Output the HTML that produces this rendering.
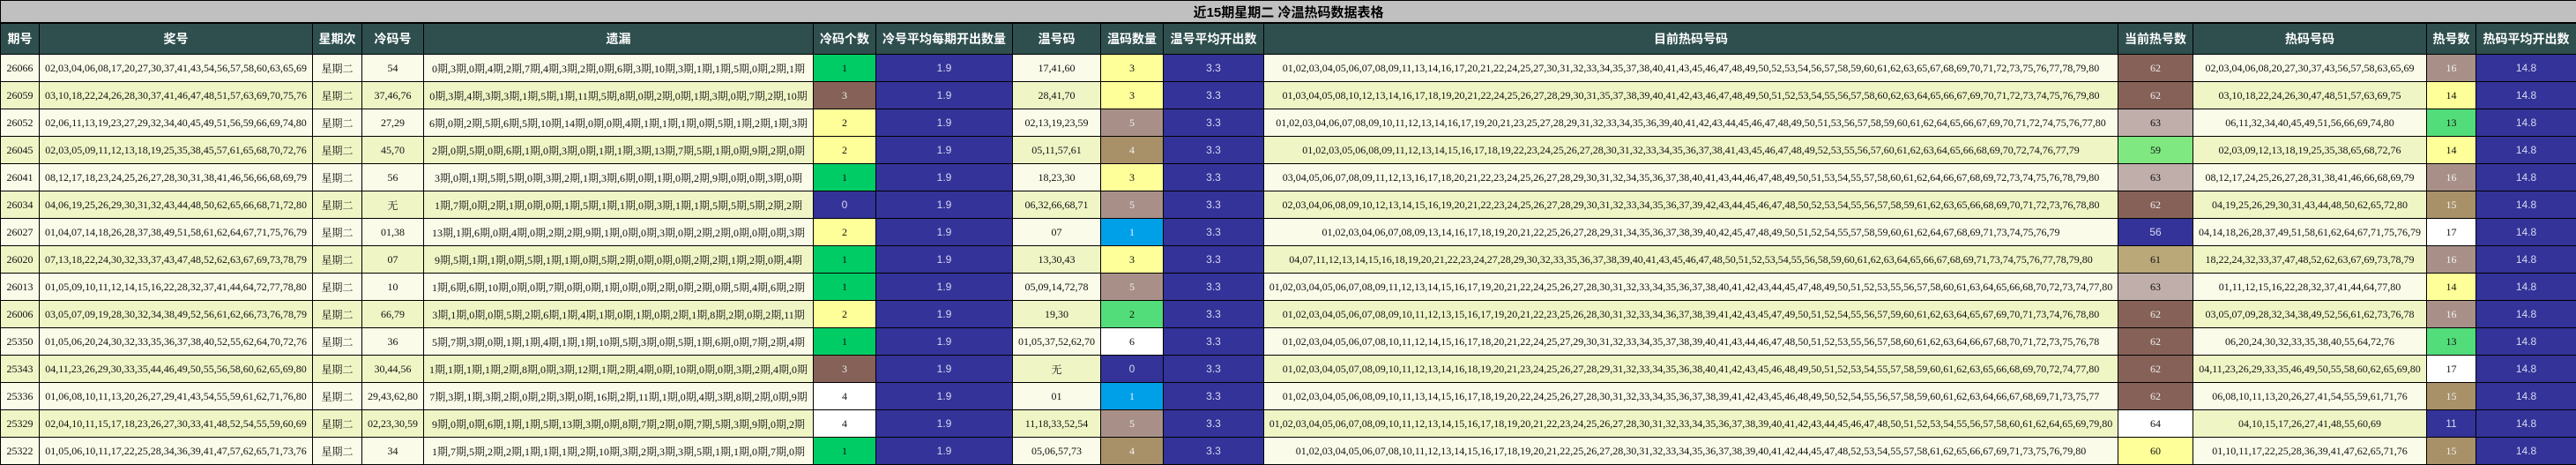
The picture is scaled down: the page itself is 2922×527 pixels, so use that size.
<!DOCTYPE html>
<html><head><meta charset="utf-8"><style>
html,body{margin:0;padding:0;background:#fff;width:2922px;height:527px;overflow:hidden}
table{border-collapse:collapse;table-layout:fixed;width:2922px}
td,th{border:1px solid #000;padding:0;text-align:center;white-space:nowrap;overflow:hidden;font-family:"Liberation Serif","Noto Serif CJK SC",serif;font-size:12px;color:#111}
.t td{height:24px;background:#c0c0c0;font-family:"Liberation Sans","Noto Sans CJK SC",sans-serif;font-weight:bold;font-size:15px;color:#000;border-bottom:2px solid #000}
th{height:34px;background:#2f4f4f;color:#fff;font-family:"Liberation Sans","Noto Sans CJK SC",sans-serif;font-weight:bold;font-size:14px}
tbody tr td{height:30px}
tr.a td{background:#fafbe8}
tr.b td{background:#f0f5c6}
tr td.n{background:#333399;color:#d8d8f0;font-family:"Liberation Sans",sans-serif}
tr td.g{background:#00cc66}
tr td.br{background:#856157;color:#eee}
tr td.y{background:#ffff99}
tr td.r{background:#a89088;color:#f2f2f2}
tr td.pk{background:#c0aeaa}
tr td.tn{background:#a89068;color:#f2f2f2}
tr td.lg{background:#80e880}
tr td.gg{background:#52dd7a}
tr td.kh{background:#bba878}
tr td.cy{background:#00a0e8;color:#eef}
tr td.w{background:#fff}
</style></head><body>
<table>
<colgroup><col style="width:44px"><col style="width:310px"><col style="width:56px"><col style="width:70px"><col style="width:442px"><col style="width:71px"><col style="width:155px"><col style="width:100px"><col style="width:71px"><col style="width:114px"><col style="width:969px"><col style="width:85px"><col style="width:265px"><col style="width:56px"><col style="width:114px"></colgroup>
<tr class="t"><td colspan="15">近15期星期二 冷温热码数据表格</td></tr>
<tr><th>期号</th><th>奖号</th><th>星期次</th><th>冷码号</th><th>遗漏</th><th>冷码个数</th><th>冷号平均每期开出数量</th><th>温号码</th><th>温码数量</th><th>温号平均开出数</th><th>目前热码号码</th><th>当前热号数</th><th>热码号码</th><th>热号数</th><th>热码平均开出数</th></tr>
<tbody>
<tr class="a"><td>26066</td><td>02,03,04,06,08,17,20,27,30,37,41,43,54,56,57,58,60,63,65,69</td><td>星期二</td><td>54</td><td>0期,3期,0期,4期,2期,7期,4期,3期,2期,0期,6期,3期,10期,3期,1期,1期,5期,0期,2期,1期</td><td class="g">1</td><td class="n">1.9</td><td>17,41,60</td><td class="y">3</td><td class="n">3.3</td><td>01,02,03,04,05,06,07,08,09,11,13,14,16,17,20,21,22,24,25,27,30,31,32,33,34,35,37,38,40,41,43,45,46,47,48,49,50,52,53,54,56,57,58,59,60,61,62,63,65,67,68,69,70,71,72,73,75,76,77,78,79,80</td><td class="br">62</td><td>02,03,04,06,08,20,27,30,37,43,56,57,58,63,65,69</td><td class="r">16</td><td class="n">14.8</td></tr>
<tr class="b"><td>26059</td><td>03,10,18,22,24,26,28,30,37,41,46,47,48,51,57,63,69,70,75,76</td><td>星期二</td><td>37,46,76</td><td>0期,3期,4期,3期,3期,1期,5期,1期,11期,5期,8期,0期,2期,0期,1期,3期,0期,7期,2期,10期</td><td class="br">3</td><td class="n">1.9</td><td>28,41,70</td><td class="y">3</td><td class="n">3.3</td><td>01,03,04,05,08,10,12,13,14,16,17,18,19,20,21,22,24,25,26,27,28,29,30,31,35,37,38,39,40,41,42,43,46,47,48,49,50,51,52,53,54,55,56,57,58,60,62,63,64,65,66,67,69,70,71,72,73,74,75,76,79,80</td><td class="br">62</td><td>03,10,18,22,24,26,30,47,48,51,57,63,69,75</td><td class="y">14</td><td class="n">14.8</td></tr>
<tr class="a"><td>26052</td><td>02,06,11,13,19,23,27,29,32,34,40,45,49,51,56,59,66,69,74,80</td><td>星期二</td><td>27,29</td><td>6期,0期,2期,5期,6期,5期,10期,14期,0期,0期,4期,1期,1期,1期,0期,5期,1期,2期,1期,3期</td><td class="y">2</td><td class="n">1.9</td><td>02,13,19,23,59</td><td class="r">5</td><td class="n">3.3</td><td>01,02,03,04,06,07,08,09,10,11,12,13,14,16,17,19,20,21,23,25,27,28,29,31,32,33,34,35,36,39,40,41,42,43,44,45,46,47,48,49,50,51,53,56,57,58,59,60,61,62,64,65,66,67,69,70,71,72,74,75,76,77,80</td><td class="pk">63</td><td>06,11,32,34,40,45,49,51,56,66,69,74,80</td><td class="gg">13</td><td class="n">14.8</td></tr>
<tr class="b"><td>26045</td><td>02,03,05,09,11,12,13,18,19,25,35,38,45,57,61,65,68,70,72,76</td><td>星期二</td><td>45,70</td><td>2期,0期,5期,0期,6期,1期,0期,3期,0期,1期,1期,3期,13期,7期,5期,1期,0期,9期,2期,0期</td><td class="y">2</td><td class="n">1.9</td><td>05,11,57,61</td><td class="tn">4</td><td class="n">3.3</td><td>01,02,03,05,06,08,09,11,12,13,14,15,16,17,18,19,22,23,24,25,26,27,28,30,31,32,33,34,35,36,37,38,41,43,45,46,47,48,49,52,53,55,56,57,60,61,62,63,64,65,66,68,69,70,72,74,76,77,79</td><td class="lg">59</td><td>02,03,09,12,13,18,19,25,35,38,65,68,72,76</td><td class="y">14</td><td class="n">14.8</td></tr>
<tr class="a"><td>26041</td><td>08,12,17,18,23,24,25,26,27,28,30,31,38,41,46,56,66,68,69,79</td><td>星期二</td><td>56</td><td>3期,0期,1期,5期,5期,0期,3期,2期,1期,3期,6期,0期,1期,0期,2期,9期,0期,0期,3期,0期</td><td class="g">1</td><td class="n">1.9</td><td>18,23,30</td><td class="y">3</td><td class="n">3.3</td><td>03,04,05,06,07,08,09,11,12,13,16,17,18,20,21,22,23,24,25,26,27,28,29,30,31,32,34,35,36,37,38,40,41,43,44,46,47,48,49,50,51,53,54,55,57,58,60,61,62,64,66,67,68,69,72,73,74,75,76,78,79,80</td><td class="pk">63</td><td>08,12,17,24,25,26,27,28,31,38,41,46,66,68,69,79</td><td class="r">16</td><td class="n">14.8</td></tr>
<tr class="b"><td>26034</td><td>04,06,19,25,26,29,30,31,32,43,44,48,50,62,65,66,68,71,72,80</td><td>星期二</td><td>无</td><td>1期,7期,0期,2期,1期,0期,0期,1期,5期,1期,1期,0期,3期,1期,1期,5期,5期,5期,2期,2期</td><td class="n">0</td><td class="n">1.9</td><td>06,32,66,68,71</td><td class="r">5</td><td class="n">3.3</td><td>02,03,04,06,08,09,10,12,13,14,15,16,19,20,21,22,23,24,25,26,27,28,29,30,31,32,33,34,35,36,37,39,42,43,44,45,46,47,48,50,52,53,54,55,56,57,58,59,61,62,63,65,66,68,69,70,71,72,73,76,78,80</td><td class="br">62</td><td>04,19,25,26,29,30,31,43,44,48,50,62,65,72,80</td><td class="tn">15</td><td class="n">14.8</td></tr>
<tr class="a"><td>26027</td><td>01,04,07,14,18,26,28,37,38,49,51,58,61,62,64,67,71,75,76,79</td><td>星期二</td><td>01,38</td><td>13期,1期,6期,0期,4期,0期,2期,2期,9期,1期,0期,0期,3期,0期,2期,2期,0期,0期,0期,3期</td><td class="y">2</td><td class="n">1.9</td><td>07</td><td class="cy">1</td><td class="n">3.3</td><td>01,02,03,04,06,07,08,09,13,14,16,17,18,19,20,21,22,25,26,27,28,29,31,34,35,36,37,38,39,40,42,45,47,48,49,50,51,52,54,55,57,58,59,60,61,62,64,67,68,69,71,73,74,75,76,79</td><td class="n">56</td><td>04,14,18,26,28,37,49,51,58,61,62,64,67,71,75,76,79</td><td class="w">17</td><td class="n">14.8</td></tr>
<tr class="b"><td>26020</td><td>07,13,18,22,24,30,32,33,37,43,47,48,52,62,63,67,69,73,78,79</td><td>星期二</td><td>07</td><td>9期,5期,1期,1期,0期,5期,1期,1期,0期,5期,2期,0期,0期,0期,2期,2期,1期,2期,0期,4期</td><td class="g">1</td><td class="n">1.9</td><td>13,30,43</td><td class="y">3</td><td class="n">3.3</td><td>04,07,11,12,13,14,15,16,18,19,20,21,22,23,24,27,28,29,30,32,33,35,36,37,38,39,40,41,43,45,46,47,48,50,51,52,53,54,55,56,58,59,60,61,62,63,64,65,66,67,68,69,71,73,74,75,76,77,78,79,80</td><td class="kh">61</td><td>18,22,24,32,33,37,47,48,52,62,63,67,69,73,78,79</td><td class="r">16</td><td class="n">14.8</td></tr>
<tr class="a"><td>26013</td><td>01,05,09,10,11,12,14,15,16,22,28,32,37,41,44,64,72,77,78,80</td><td>星期二</td><td>10</td><td>1期,6期,6期,10期,0期,0期,7期,0期,0期,1期,0期,0期,2期,0期,2期,0期,5期,4期,6期,2期</td><td class="g">1</td><td class="n">1.9</td><td>05,09,14,72,78</td><td class="r">5</td><td class="n">3.3</td><td>01,02,03,04,05,06,07,08,09,11,12,13,14,15,16,17,19,20,21,22,24,25,26,27,28,30,31,32,33,34,35,36,37,38,40,41,42,43,44,45,47,48,49,50,51,52,53,55,56,57,58,60,61,63,64,65,66,68,70,72,73,74,77,80</td><td class="pk">63</td><td>01,11,12,15,16,22,28,32,37,41,44,64,77,80</td><td class="y">14</td><td class="n">14.8</td></tr>
<tr class="b"><td>26006</td><td>03,05,07,09,19,28,30,32,34,38,49,52,56,61,62,66,73,76,78,79</td><td>星期二</td><td>66,79</td><td>3期,1期,0期,0期,5期,2期,6期,1期,4期,1期,0期,1期,0期,2期,1期,8期,2期,0期,2期,11期</td><td class="y">2</td><td class="n">1.9</td><td>19,30</td><td class="gg">2</td><td class="n">3.3</td><td>01,02,03,04,05,06,07,08,09,10,11,12,13,15,16,17,19,20,21,22,23,25,26,28,30,31,32,33,34,36,37,38,39,41,42,43,45,47,49,50,51,52,54,55,56,57,59,60,61,62,63,64,65,67,69,70,71,73,74,76,78,80</td><td class="br">62</td><td>03,05,07,09,28,32,34,38,49,52,56,61,62,73,76,78</td><td class="r">16</td><td class="n">14.8</td></tr>
<tr class="a"><td>25350</td><td>01,05,06,20,24,30,32,33,35,36,37,38,40,52,55,62,64,70,72,76</td><td>星期二</td><td>36</td><td>5期,7期,3期,0期,1期,1期,4期,1期,1期,10期,5期,3期,0期,5期,1期,6期,0期,7期,2期,4期</td><td class="g">1</td><td class="n">1.9</td><td>01,05,37,52,62,70</td><td class="w">6</td><td class="n">3.3</td><td>01,02,03,04,05,06,07,08,10,11,12,14,15,16,17,18,20,21,22,24,25,27,29,30,31,32,33,34,35,37,38,39,40,41,43,44,46,47,48,50,51,52,53,55,56,57,58,60,61,62,63,64,66,67,68,70,71,72,73,75,76,78</td><td class="br">62</td><td>06,20,24,30,32,33,35,38,40,55,64,72,76</td><td class="gg">13</td><td class="n">14.8</td></tr>
<tr class="b"><td>25343</td><td>04,11,23,26,29,30,33,35,44,46,49,50,55,56,58,60,62,65,69,80</td><td>星期二</td><td>30,44,56</td><td>1期,1期,1期,1期,2期,8期,0期,3期,12期,1期,2期,4期,0期,10期,0期,0期,3期,2期,4期,0期</td><td class="br">3</td><td class="n">1.9</td><td>无</td><td class="n">0</td><td class="n">3.3</td><td>01,02,03,04,05,07,08,09,10,11,12,13,14,16,18,19,20,21,23,24,25,26,27,28,29,31,32,33,34,35,36,38,40,41,42,43,45,46,48,49,50,51,52,53,54,55,57,58,59,60,61,62,63,65,66,68,69,70,72,74,77,80</td><td class="br">62</td><td>04,11,23,26,29,33,35,46,49,50,55,58,60,62,65,69,80</td><td class="w">17</td><td class="n">14.8</td></tr>
<tr class="a"><td>25336</td><td>01,06,08,10,11,13,20,26,27,29,41,43,54,55,59,61,62,71,76,80</td><td>星期二</td><td>29,43,62,80</td><td>7期,3期,1期,3期,2期,0期,2期,3期,0期,16期,2期,11期,1期,0期,4期,3期,8期,2期,0期,9期</td><td class="w">4</td><td class="n">1.9</td><td>01</td><td class="cy">1</td><td class="n">3.3</td><td>01,02,03,04,05,06,08,09,10,11,13,14,15,16,17,18,19,20,22,24,25,26,27,28,30,31,32,33,34,35,36,37,38,39,41,42,43,45,46,48,49,50,52,54,55,56,57,58,59,60,61,62,63,64,66,67,68,69,71,73,75,77</td><td class="br">62</td><td>06,08,10,11,13,20,26,27,41,54,55,59,61,71,76</td><td class="tn">15</td><td class="n">14.8</td></tr>
<tr class="b"><td>25329</td><td>02,04,10,11,15,17,18,23,26,27,30,33,41,48,52,54,55,59,60,69</td><td>星期二</td><td>02,23,30,59</td><td>9期,0期,0期,6期,1期,1期,5期,13期,3期,0期,8期,7期,2期,0期,7期,5期,3期,9期,0期,2期</td><td class="w">4</td><td class="n">1.9</td><td>11,18,33,52,54</td><td class="r">5</td><td class="n">3.3</td><td>01,02,03,04,05,06,07,08,09,10,11,12,13,14,15,16,17,18,19,20,21,22,23,24,25,26,27,28,30,31,32,33,34,35,36,37,38,39,40,41,42,43,44,45,46,47,48,50,51,52,53,54,55,56,57,58,60,61,62,64,65,69,79,80</td><td class="w">64</td><td>04,10,15,17,26,27,41,48,55,60,69</td><td class="n">11</td><td class="n">14.8</td></tr>
<tr class="a"><td>25322</td><td>01,05,06,10,11,17,22,25,28,34,36,39,41,47,57,62,65,71,73,76</td><td>星期二</td><td>34</td><td>1期,7期,5期,2期,2期,1期,1期,1期,2期,10期,3期,2期,3期,3期,5期,1期,1期,0期,7期,0期</td><td class="g">1</td><td class="n">1.9</td><td>05,06,57,73</td><td class="tn">4</td><td class="n">3.3</td><td>01,02,03,04,05,06,07,08,10,11,12,13,14,15,16,17,18,19,20,21,22,25,26,27,28,30,31,32,33,34,35,36,37,38,39,40,41,42,44,45,47,48,52,53,54,55,57,58,61,62,65,66,67,69,71,73,75,76,79,80</td><td class="y">60</td><td>01,10,11,17,22,25,28,36,39,41,47,62,65,71,76</td><td class="tn">15</td><td class="n">14.8</td></tr>
</tbody></table>
</body></html>
